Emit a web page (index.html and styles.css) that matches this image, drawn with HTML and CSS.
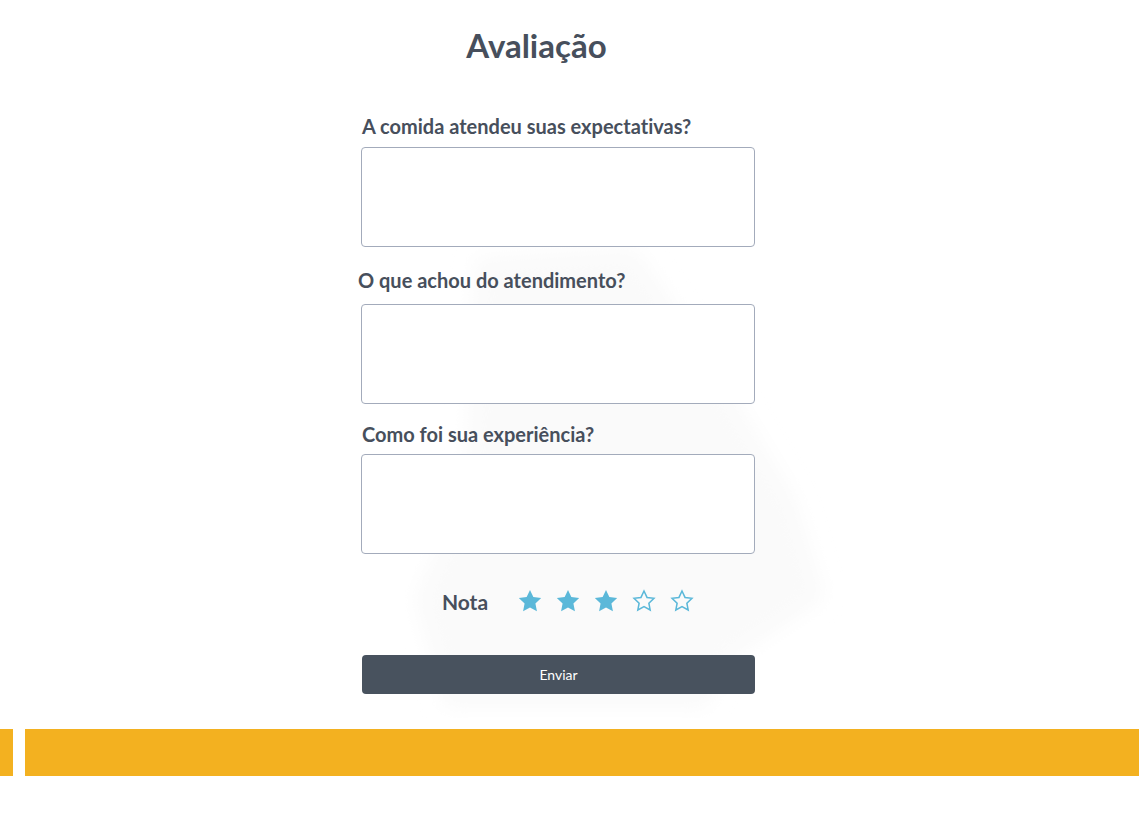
FILE: index.html
```html
<!DOCTYPE html>
<html lang="pt-BR">
<head>
<meta charset="utf-8">
<title>Avaliação</title>
<link rel="stylesheet" href="styles.css">
</head>
<body>
<div class="page">
  <svg class="watermark" width="440" height="480" viewBox="0 0 440 480" aria-hidden="true">
    <defs><filter id="blur"><feGaussianBlur stdDeviation="10"/></filter></defs>
    <path d="M70 20 L230 10 L300 110 L390 260 L420 360 L330 420 L300 470 L40 470 L10 360 L60 250 Z" fill="#fafafa" filter="url(#blur)"/>
  </svg>
  <main class="form">
    <h1 class="title">Avaliação</h1>
    <label class="label label-first">A comida atendeu suas expectativas?</label>
    <textarea class="field"></textarea>
    <label class="label label-shift">O que achou do atendimento?</label>
    <textarea class="field"></textarea>
    <label class="label label-third">Como foi sua experiência?</label>
    <textarea class="field"></textarea>
    <div class="rating">
      <span class="rating-label">Nota</span>
      <div class="stars">
        <svg class="star" viewBox="0 0 24 24"><path class="on" d="M12 1.8l3.1 6.6 7.2.9-5.3 5 1.4 7.1L12 17.9l-6.4 3.5 1.4-7.1-5.3-5 7.2-.9z"/></svg>
        <svg class="star" viewBox="0 0 24 24"><path class="on" d="M12 1.8l3.1 6.6 7.2.9-5.3 5 1.4 7.1L12 17.9l-6.4 3.5 1.4-7.1-5.3-5 7.2-.9z"/></svg>
        <svg class="star" viewBox="0 0 24 24"><path class="on" d="M12 1.8l3.1 6.6 7.2.9-5.3 5 1.4 7.1L12 17.9l-6.4 3.5 1.4-7.1-5.3-5 7.2-.9z"/></svg>
        <svg class="star" viewBox="0 0 24 24"><path class="off" d="M12 2.8l2.8 5.9 6.4.8-4.7 4.5 1.2 6.3L12 17.2l-5.7 3.1 1.2-6.3-4.7-4.5 6.4-.8z"/></svg>
        <svg class="star" viewBox="0 0 24 24"><path class="off" d="M12 2.8l2.8 5.9 6.4.8-4.7 4.5 1.2 6.3L12 17.2l-5.7 3.1 1.2-6.3-4.7-4.5 6.4-.8z"/></svg>
      </div>
    </div>
    <button class="submit" type="button">Enviar</button>
  </main>
  <footer class="band">
    <div class="band-stub"></div>
    <div class="band-main"></div>
  </footer>
</div>
</body>
</html>
```
FILE: styles.css
```css
* { box-sizing: border-box; }
html, body { margin: 0; padding: 0; background: #ffffff; }
body {
  font-family: Lato, "Open Sans", sans-serif;
  color: #474f5c;
  font-variant-ligatures: none;
}

.page {
  position: relative;
  min-height: 813px;
  padding-top: 23px;
}

.watermark {
  position: absolute;
  left: 405px;
  top: 238px;
  z-index: 0;
}

.form {
  position: relative;
  z-index: 1;
  width: 394px;
  margin-left: 361px;
  display: flex;
  flex-direction: column;
}

.title {
  margin: 0 0 47px 0;
  padding-right: 43px;
  text-align: center;
  font-size: 33px;
  line-height: 44px;
  font-weight: 700;
  color: #474f5c;
}

.label {
  display: block;
  font-size: 20px;
  line-height: 24px;
  font-weight: 700;
  color: #474f5c;
  margin: 0 0 6px 1px;
}

.label-first { margin-bottom: 9px; }
.label-shift { margin: 1px 0 12px -3px; }
.label-third { margin: -2px 0 8px 1px; }

.field {
  display: block;
  width: 394px;
  height: 100px;
  margin: 0 0 20px 0;
  border: 1px solid #a3abbb;
  border-radius: 4px;
  background: #ffffff;
  resize: none;
  font-family: inherit;
}

.rating {
  display: flex;
  align-items: center;
  justify-content: center;
  gap: 29px;
  margin: 0;
  padding-left: 21px;
  height: 54px;
}

.rating-label {
  font-size: 21px;
  font-weight: 700;
  color: #474f5c;
}

.stars {
  display: flex;
  gap: 12px;
  align-items: center;
}

.star { width: 26px; height: 26px; display: block; }
.star .on { fill: #5bb8d9; }
.star .off { fill: none; stroke: #5bb8d9; stroke-width: 1.4; stroke-linejoin: miter; }

.submit {
  margin-top: 27px;
  width: 393px;
  height: 39px;
  align-self: flex-end;
  border: none;
  border-radius: 4px;
  background: #48525e;
  color: #ffffff;
  font-family: inherit;
  font-size: 14px;
}

.band {
  position: relative;
  z-index: 1;
  display: flex;
  gap: 12px;
  margin-top: 35px;
  height: 47px;
}

.band-stub { width: 13px; background: #f3b120; }
.band-main { flex: 1; background: #f3b120; }
```
